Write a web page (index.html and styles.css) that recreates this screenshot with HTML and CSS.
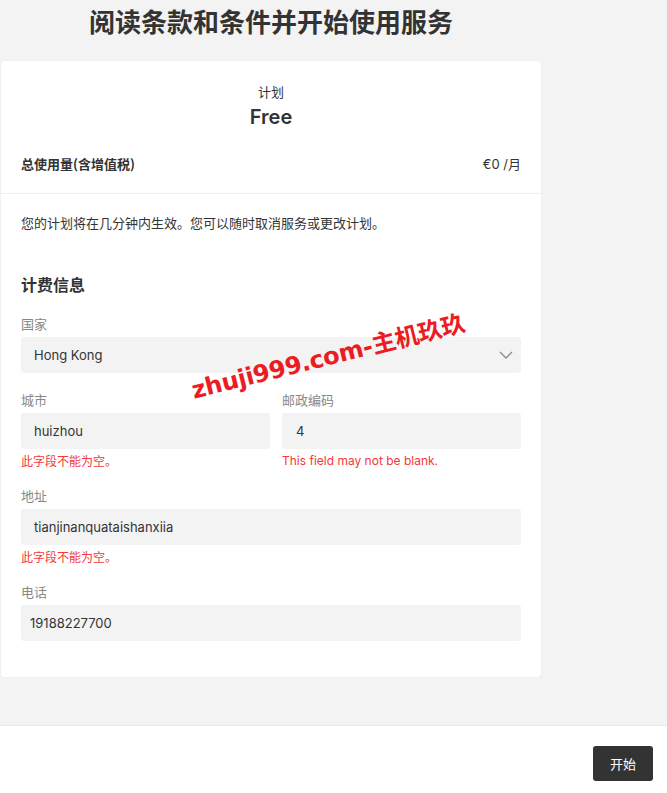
FILE: index.html
```html
<!DOCTYPE html>
<html lang="zh-CN">
<head>
<meta charset="utf-8">
<link rel="stylesheet" href="styles.css">
</head>
<body>
<div class="page">
  <main class="main">
    <div class="column">
      <h1 class="title">阅读条款和条件并开始使用服务</h1>
      <section class="card">
        <div class="plan">
          <div class="plan-label">计划</div>
          <div class="plan-name">Free</div>
        </div>
        <div class="total-row">
          <span class="total-label">总使用量(含增值税)</span>
          <span class="total-price">€0 /月</span>
        </div>
        <div class="card-body">
          <p class="notice">您的计划将在几分钟内生效。您可以随时取消服务或更改计划。</p>
          <h2 class="section-title">计费信息</h2>
          <div class="field first">
            <div class="label">国家</div>
            <div class="input select">
              <span>Hong Kong</span>
              <svg class="chev" width="14" height="8" viewBox="0 0 14 8"><path d="M1 1 L7 7 L13 1" fill="none" stroke="#8a8a8a" stroke-width="1.3"/></svg>
            </div>
          </div>
          <div class="field-row">
            <div class="field">
              <div class="label">城市</div>
              <div class="input">huizhou</div>
              <div class="error">此字段不能为空。</div>
            </div>
            <div class="field">
              <div class="label">邮政编码</div>
              <div class="input postal">4</div>
              <div class="error en">This field may not be blank.</div>
            </div>
          </div>
          <div class="field">
            <div class="label">地址</div>
            <div class="input">tianjinanquataishanxiia</div>
            <div class="error">此字段不能为空。</div>
          </div>
          <div class="field">
            <div class="label">电话</div>
            <div class="input phone">19188227700</div>
          </div>
        </div>
      </section>
    </div>
  </main>
  <footer class="footer">
    <button class="start">开始</button>
  </footer>
  <div class="watermark">zhuji999.com-主机玖玖</div>
</div>
</body>
</html>
```
FILE: styles.css
```css
* { box-sizing: border-box; }
html, body { margin: 0; padding: 0; }
body {
  background: #f3f3f3;
  font-family: Inter, "Noto Sans CJK SC", sans-serif;
  color: #333;
  font-size: 13px;
}
.page { position: relative; width: 667px; height: 793px; overflow: hidden; }
.main { height: 725px; padding-left: 1px; }
.column { width: 540px; }
.title {
  margin: 0;
  padding-top: 5px;
  height: 61px;
  text-align: center;
  font-family: "Noto Sans CJK SC", sans-serif;
  font-size: 26px;
  line-height: 32px;
  font-weight: 700;
  color: #333;
}
.card {
  background: #fff;
  border-radius: 4px;
  box-shadow: 0 0 2px rgba(0,0,0,0.06);
  padding-bottom: 36px;
}
.plan { padding-top: 22px; text-align: center; }
.plan-label { font-size: 13px; line-height: 18px; font-family: "Noto Sans CJK SC", sans-serif; }
.plan-name { font-size: 20px; line-height: 26px; font-weight: 600; margin-top: 3px; }
.total-row {
  display: flex;
  justify-content: space-between;
  padding: 25px 20px 20px;
  line-height: 18px;
  border-bottom: 1px solid #eeeeee;
}
.total-label { font-weight: 700; font-family: "Noto Sans CJK SC", sans-serif; }
.total-price { font-family: Inter, "Noto Sans CJK SC", sans-serif; }
.card-body { padding: 0 20px; }
.notice { margin: 20px 0 0; line-height: 18px; font-family: "Noto Sans CJK SC", sans-serif; }
.section-title {
  margin: 41px 0 0;
  font-size: 16px;
  line-height: 22px;
  font-weight: 700;
  font-family: "Noto Sans CJK SC", sans-serif;
}
.field { margin-top: 18px; }
.field.first { margin-top: 20px; }
.field-row { display: flex; gap: 12px; }
.field-row .field:first-child { width: 249px; }
.field-row .field:last-child { flex: 1; }
.label {
  color: #888;
  line-height: 18px;
  font-size: 13px;
  font-family: "Noto Sans CJK SC", sans-serif;
  margin-bottom: 4px;
}
.input {
  height: 36px;
  background: #f3f3f3;
  border-radius: 3px;
  padding: 0 13px;
  display: flex;
  align-items: center;
  font-size: 13px;
  color: #333;
}
.select { justify-content: space-between; padding-right: 8px; }
.postal { padding-left: 14px; }
.phone { padding-left: 9px; }
.error {
  margin-top: 4px;
  color: #f5363a;
  font-size: 12px;
  line-height: 16px;
  font-family: "Noto Sans CJK SC", sans-serif;
}
.error.en { font-family: Inter, sans-serif; }
.footer {
  height: 68px;
  background: #fff;
  border-top: 1px solid #ececec;
  display: flex;
  justify-content: flex-end;
  align-items: flex-start;
  padding: 20px 14px 0 0;
}
.start {
  width: 60px;
  height: 35px;
  background: #333;
  color: #fff;
  border: none;
  border-radius: 3px;
  font-size: 13px;
  font-family: "Noto Sans CJK SC", sans-serif;
}
.watermark {
  position: absolute;
  left: 188px;
  top: 342px;
  transform: rotate(-14deg);
  transform-origin: center;
  color: #ec1c24;
  font-family: "DejaVu Sans", "Noto Sans CJK SC", sans-serif;
  font-weight: 700;
  font-size: 24px;
  line-height: 30px;
  letter-spacing: -0.3px;
  white-space: nowrap;
}
```
